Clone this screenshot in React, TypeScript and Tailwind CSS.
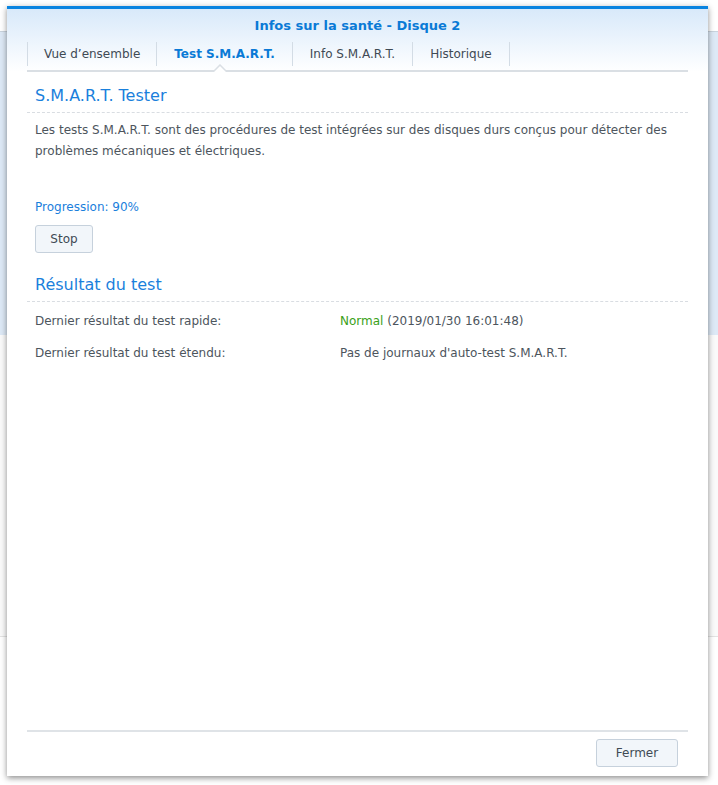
import React from 'react';

const tabs = ['Vue d’ensemble', 'Test S.M.A.R.T.', 'Info S.M.A.R.T.', 'Historique'];

export default function App() {
  const font = { fontFamily: '"DejaVu Sans", Verdana, sans-serif' };
  return (
    <div className="relative w-[718px] h-[785px] overflow-hidden bg-white" style={font}>
      {/* page behind the dialog */}
      <div className="h-[31px] bg-white" />
      <div className="h-[304px] border-t border-[#c9d3dd] bg-[#dde9f6]" />
      <div className="h-[302px] bg-[#fafafa] border-b border-[#e3e3e3]" />

      {/* dialog */}
      <div className="absolute left-[7px] top-[6px] w-[701px] h-[770px] flex flex-col bg-white border-t-[3px] border-[#0a84e0] shadow-[0_2px_6px_rgba(0,0,0,0.45)]">
        <div className="bg-gradient-to-b from-[#d8e9fa] to-white px-5 pt-[7px]">
          <div className="text-center text-[13px] font-bold text-[#0a7ad6]">
            Infos sur la santé - Disque 2
          </div>
          <div className="relative mt-[6px] flex h-[30px] border-b-2 border-[#dadfe4]">
            {tabs.map((t, i) => (
              <div
                key={t}
                className={`flex items-start pt-[3px] h-[24px] border-r border-[#d3dce5] text-[12px] ${
                  i === 0 ? 'border-l px-4' : 'px-[17px]'
                } ${i === 1 ? 'font-bold text-[#0a7ad6]' : 'text-[#404a54]'}`}
              >
                {t}
              </div>
            ))}
            <div className="absolute left-[186px] -bottom-[2px] w-[14px] h-[8px]">
              <svg width="14" height="8" viewBox="0 0 14 8">
                <path d="M0 8 L7 1 L14 8" fill="white" stroke="#dadfe4" strokeWidth="1.5" />
              </svg>
            </div>
          </div>
        </div>

        <div className="flex-1 px-5">
          <div className="mt-[12px] border-b border-dashed border-[#d9dde2] pb-[4px] pl-2 text-[16px] text-[#1a80dc]">
            S.M.A.R.T. Tester
          </div>
          <p className="mt-[7px] pl-2 pr-2 text-[12px] leading-[21px] text-[#4d555d]">
            Les tests S.M.A.R.T. sont des procédures de test intégrées sur des disques durs conçus pour détecter des
            problèmes mécaniques et électriques.
          </p>
          <div className="mt-[36px] pl-2 text-[12px] text-[#1a80dc]">Progression: 90%</div>
          <button className="ml-2 mt-[9px] h-[28px] w-[58px] rounded-[3px] border border-[#c6d1dc] bg-[#f2f6fa] text-[12px] text-[#404a54]">
            Stop
          </button>

          <div className="mt-[20px] border-b border-dashed border-[#d9dde2] pb-[4px] pl-2 text-[16px] text-[#1a80dc]">
            Résultat du test
          </div>
          <div className="mt-[10px] pl-2 text-[12px] text-[#4d555d]">
            <div className="flex h-[32px]">
              <div className="w-[305px]">Dernier résultat du test rapide:</div>
              <div>
                <span className="text-[#3aa118]">Normal</span> (2019/01/30 16:01:48)
              </div>
            </div>
            <div className="flex h-[32px]">
              <div className="w-[305px]">Dernier résultat du test étendu:</div>
              <div>Pas de journaux d'auto-test S.M.A.R.T.</div>
            </div>
          </div>
        </div>

        <div className="mx-5 border-t-2 border-[#dfe3e7] flex justify-end pt-[7px] pb-[9px] pr-[10px]">
          <button className="h-[28px] w-[82px] rounded-[3px] border border-[#c6d1dc] bg-[#f2f6fa] text-[12px] text-[#404a54]">
            Fermer
          </button>
        </div>
      </div>
    </div>
  );
}
